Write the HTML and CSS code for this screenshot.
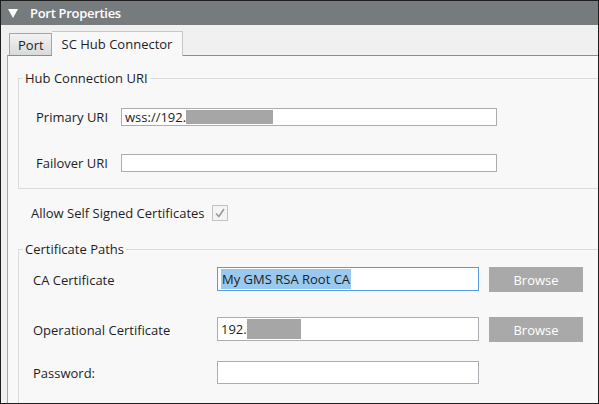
FILE: index.html
```html
<!DOCTYPE html>
<html>
<head>
<meta charset="utf-8">
<link rel="stylesheet" href="styles.css">
</head>
<body>
<div class="window">
  <div class="header">
    <svg class="caret" width="10" height="9" viewBox="0 0 10 9"><polygon points="0,0 10,0 5,9" fill="#ffffff"/></svg>
    <span class="title">Port Properties</span>
  </div>
  <div class="tabbar">
    <div class="tab">Port</div>
    <div class="tab active">SC Hub Connector</div>
  </div>
  <div class="panel">
    <fieldset class="group hub">
      <legend>Hub Connection URI</legend>
      <div class="uri-grid">
        <span class="label">Primary URI</span>
        <div class="input">wss://192.<span class="redact r1"></span></div>
        <span class="label">Failover URI</span>
        <div class="input"></div>
      </div>
    </fieldset>
    <div class="allow">
      <span class="label">Allow Self Signed Certificates</span>
      <span class="check"><svg width="14" height="14" viewBox="0 0 14 14"><path d="M3 7.5 L5.8 10.5 L11 3" fill="none" stroke="#9a9a9a" stroke-width="1.6"/></svg></span>
    </div>
    <fieldset class="group certs">
      <legend>Certificate Paths</legend>
      <div class="cert-rows">
        <div class="cert-row first">
          <span class="label big">CA Certificate</span>
          <div class="input tall focus"><span class="sel">My GMS RSA Root CA</span></div>
          <div class="btn">Browse</div>
        </div>
        <div class="cert-row second">
          <span class="label big">Operational Certificate</span>
          <div class="input tall">192.<span class="redact r2"></span></div>
          <div class="btn">Browse</div>
        </div>
        <div class="cert-row third">
          <span class="label big">Password:</span>
          <div class="input pw"></div>
        </div>
      </div>
    </fieldset>
  </div>
</div>
</body>
</html>
```
FILE: styles.css
```css
* { box-sizing: border-box; }
html, body { margin: 0; padding: 0; }
body {
  width: 599px;
  height: 404px;
  font-family: "Open Sans", "Noto Sans", sans-serif;
  font-size: 12px;
  color: #1e1e1e;
  overflow: hidden;
}
.window {
  width: 599px;
  height: 404px;
  border: 1px solid #1e1e1e;
  background: #f0f0f0;
  display: flex;
  flex-direction: column;
}
.header {
  height: 24px;
  flex: none;
  background: #767b7d;
  color: #ffffff;
  display: flex;
  align-items: center;
  padding-left: 7px;
  font-weight: 600;
  font-size: 13px;
  letter-spacing: -0.3px;
}
.caret { margin-right: 12px; margin-top: 1px; }
.tabbar {
  height: 30px;
  flex: none;
  display: flex;
  align-items: flex-end;
  padding-left: 8px;
}
.tab {
  height: 22px;
  padding: 0 7px 0 8px;
  border: 1px solid #a5a5a5;
  border-bottom: none;
  background: linear-gradient(#f2f2f2, #dadada);
  display: flex;
  align-items: center;
  font-size: 13px;
}
.tab.active {
  height: 25px;
  margin-bottom: -1px;
  padding: 0 10px 0 10px;
  background: #f8f8f8;
  border-color: #c8c8c8;
  border-left: none;
  position: relative;
  z-index: 1;
}
.panel {
  flex: 1;
  margin-left: 6px;
  border-top: 1px solid #8c8c8c;
  border-left: 1px solid #a8a8a8;
  background: #f8f8f8;
  padding-left: 10px;
  overflow: hidden;
  display: flex;
  flex-direction: column;
}
.group {
  margin: 0;
  padding: 0;
  border: 1px solid #dcdcdc;
  border-right: none;
  min-width: 0;
}
.group legend {
  margin-left: 4px;
  padding: 0 2px;
  font-size: 13px;
  line-height: 15px;
}
.hub { margin-top: 15px; padding: 22px 0 16px 0; }
.uri-grid {
  display: grid;
  grid-template-columns: 85px 376px;
  row-gap: 28px;
  align-items: center;
  padding-left: 17px;
}
.label { font-size: 13px; line-height: 18px; }
.input {
  height: 18px;
  border: 1px solid #abadb3;
  background: #ffffff;
  display: flex;
  align-items: center;
  padding-left: 3px;
  font-size: 13px;
  white-space: nowrap;
  overflow: hidden;
}
.redact { display: inline-block; background: #a6a6a6; }
.r1 { width: 87px; height: 14px; }
.r2 { width: 54px; height: 20px; }
.allow {
  margin: 16px 0 0 13px;
  height: 16px;
  display: flex;
  align-items: center;
}
.check {
  margin-left: 7px;
  width: 16px;
  height: 16px;
  border: 1px solid #c2c2c2;
  background: #f4f4f4;
  display: flex;
  align-items: center;
  justify-content: center;
}
.certs { margin-top: 21px; padding: 10px 0 40px 0; flex: none; }
.cert-rows { padding-left: 14px; }
.cert-row { display: flex; align-items: center; height: 25px; }
.cert-row.second { margin-top: 25px; }
.cert-row.third { margin-top: 19px; height: 23px; }
.label.big { width: 184px; font-size: 13px; }
.input.tall { width: 262px; height: 24px; align-self: flex-start; }
.input.pw { width: 262px; height: 23px; }
.input.focus { border-color: #569de5; }
.sel { background: #99c9ef; line-height: 20px; padding: 0 1px; }
.btn {
  margin-left: 10px;
  width: 94px;
  height: 25px;
  background: #a9a9a9;
  color: #ffffff;
  font-size: 13px;
  display: flex;
  align-items: center;
  justify-content: center;
}
```
